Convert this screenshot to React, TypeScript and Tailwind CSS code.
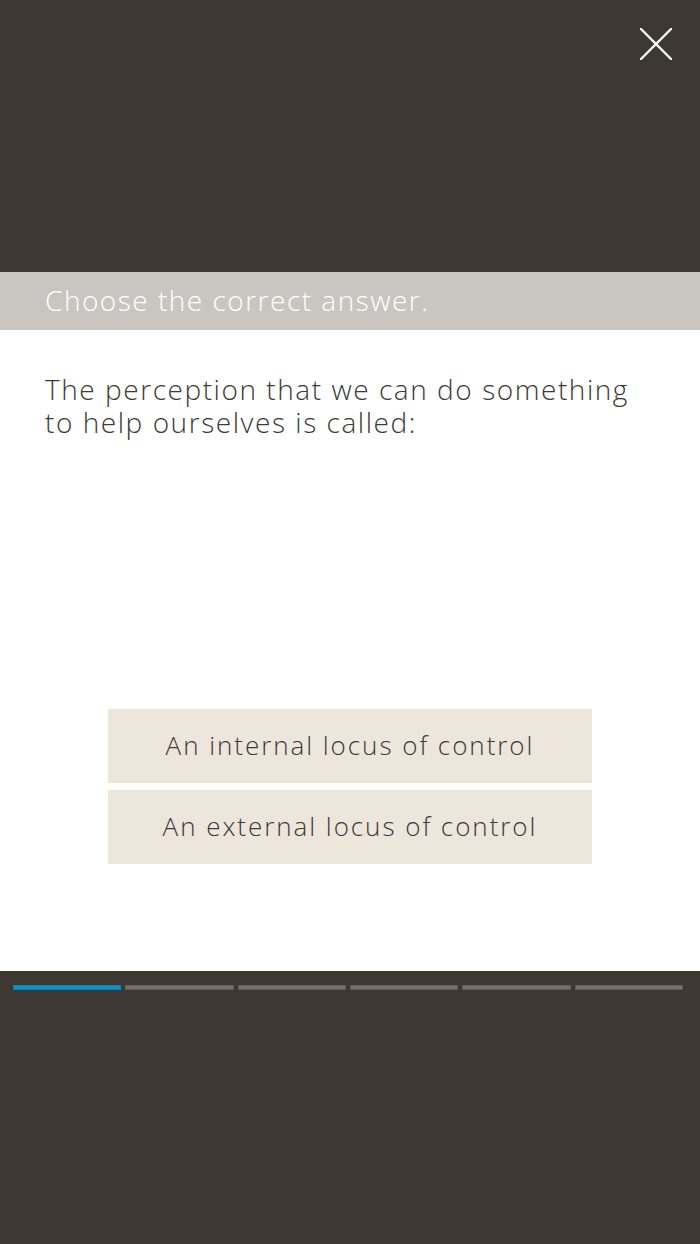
import React from "react";

export default function App() {
  const segs = [0, 1, 2, 3, 4, 5];
  return (
    <div className="w-[700px] h-[1244px] flex flex-col bg-[#3d3832]" style={{ fontFamily: '"Open Sans", "Noto Sans", sans-serif' }}>
      <div className="h-[272px] flex justify-end items-start pt-[28px] pr-[28px]">
        <svg width="32" height="32" viewBox="0 0 32 32" className="block">
          <path d="M1 1 L31 31 M31 1 L1 31" stroke="#ffffff" strokeWidth="2.4" strokeLinecap="round" />
        </svg>
      </div>
      <div className="h-[58px] bg-[#c9c6c1] flex items-center pl-[45px]">
        <span className="text-white text-[28px] font-light leading-none tracking-[1.5px] -mt-[2px]">Choose the correct answer.</span>
      </div>
      <div className="h-[641px] bg-white flex flex-col">
        <p className="px-[45px] pt-[43px] text-[28px] font-light leading-[33px] tracking-[1.55px] text-[#3d3a38]">
          The perception that we can do something to help ourselves is called:
        </p>
        <div className="flex-1" />
        <div className="flex flex-col items-center gap-[7px] pb-[107px]">
          <div className="w-[484px] h-[74px] bg-[#ece6dc] flex items-center justify-center text-[26px] font-light tracking-[1.95px] text-[#3d3a38] pb-[2px]">
            An internal locus of control
          </div>
          <div className="w-[484px] h-[74px] bg-[#ece6dc] flex items-center justify-center text-[26px] font-light tracking-[1.95px] text-[#3d3a38] pb-[2px]">
            An external locus of control
          </div>
        </div>
      </div>
      <div className="flex-1 px-[13px] pt-[14px]">
        <div className="flex gap-[4px] w-[670px]">
          {segs.map((i) => (
            <div
              key={i}
              className={i === 0 ? "flex-1 h-[5px] bg-[#0a96cc] border border-[#0b7fae]" : "flex-1 h-[5px] bg-[#76726b] border border-[#5e5a54]"}
            />
          ))}
        </div>
      </div>
    </div>
  );
}
